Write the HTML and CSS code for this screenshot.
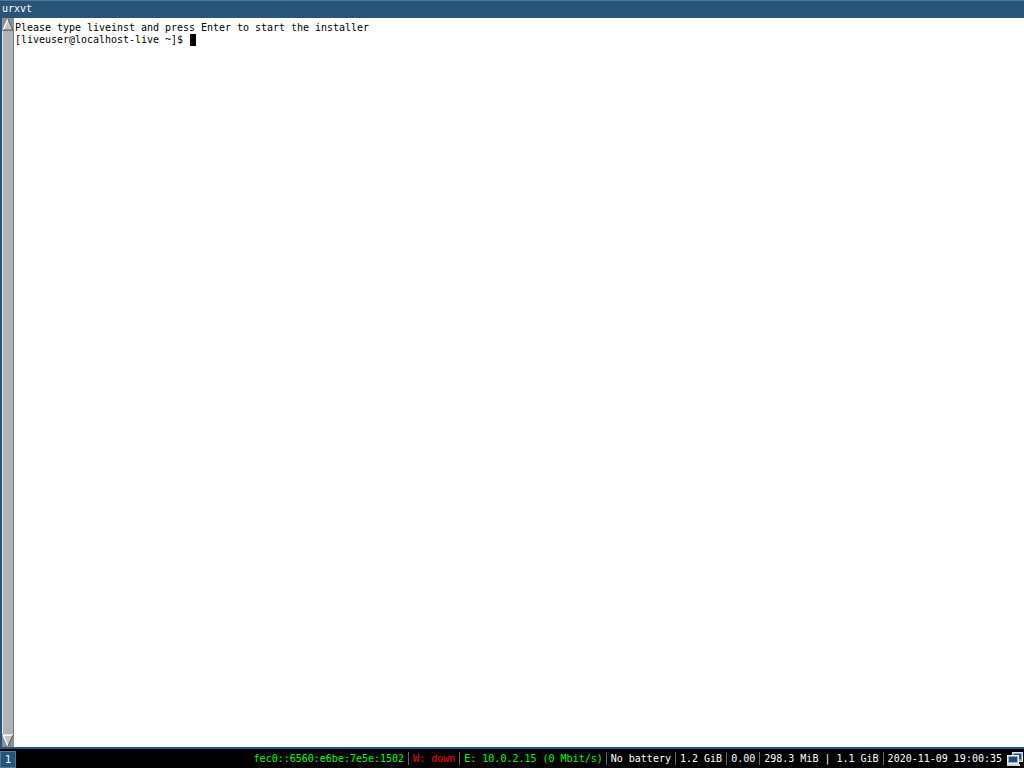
FILE: index.html
```
<!DOCTYPE html>
<html lang="en">
<head>
<meta charset="utf-8">
<title>urxvt</title>
<link rel="stylesheet" href="styles.css">
</head>
<body>
<div class="desktop">
  <div class="window">
    <div class="titlebar">urxvt</div>
    <div class="client">
      <div class="scrollbar">
        <svg class="arrow" width="12" height="13" viewBox="0 0 12 13"><rect width="12" height="13" fill="#8f8f8f"/><path d="M1 12 6 1 11 12Z" fill="#c4c4c4"/><path d="M1 12 6 1" stroke="#fff" stroke-width="1.4" fill="none"/><path d="M6 1 11 12H1" stroke="#555" fill="none"/></svg>
        <div class="thumb"></div>
        <svg class="arrow" width="12" height="13" viewBox="0 0 12 13"><rect width="12" height="13" fill="#8f8f8f"/><path d="M1 1 6 12 11 1Z" fill="#c4c4c4"/><path d="M1 1H11M1 1 6 12" stroke="#fff" stroke-width="1.4" fill="none"/><path d="M11 1 6 12" stroke="#555" fill="none"/></svg>
      </div>
      <div class="terminal">
        <div class="line">Please type liveinst and press Enter to start the installer</div>
        <div class="line">[liveuser@localhost-live ~]$ <span class="cursor"></span></div>
      </div>
    </div>
  </div>
  <div class="panel">
    <div class="workspace">1</div>
    <div class="status">
      <span class="seg good">fec0::6560:e6be:7e5e:1502</span>
      <span class="seg bad">W: down</span>
      <span class="seg good seg-tight">E: 10.0.2.15 (0 Mbit/s)</span>
      <span class="seg">No battery</span>
      <span class="seg">1.2 GiB</span>
      <span class="seg">0.00</span>
      <span class="seg">298.3 MiB | 1.1 GiB</span>
      <span class="seg">2020-11-09 19:00:35</span>
    </div>
    <svg class="tray" width="16" height="15" viewBox="0 0 16 15">
      <rect x="5.5" y="0.5" width="10" height="9" fill="#8aa0b8" stroke="#e0e2e4"/>
      <rect x="7" y="2" width="7" height="5" fill="#24517f"/>
      <rect x="0.5" y="3.5" width="11" height="8" fill="#9db0c4" stroke="#f0f0f0"/>
      <rect x="2" y="5" width="8" height="5" fill="#1d4a7a"/>
      <rect x="0" y="12" width="13" height="2" fill="#d0d2d4"/>
    </svg>
  </div>
</div>
</body>
</html>
```
FILE: styles.css
```
html, body {
  margin: 0;
  padding: 0;
  height: 100%;
  overflow: hidden;
}
.desktop {
  display: flex;
  flex-direction: column;
  width: 1024px;
  height: 768px;
  font-family: "DejaVu Sans Mono", monospace;
  font-size: 10px;
}
.window {
  flex: 1;
  display: flex;
  flex-direction: column;
  min-height: 0;
  border-bottom: 2px solid #285577;
}
.titlebar {
  height: 17px;
  line-height: 16px;
  padding-left: 2px;
  background: #285577;
  border-top: 1px solid #4c7899;
  color: #fff;
  flex: none;
}
.client {
  flex: 1;
  display: flex;
  min-height: 0;
  background: #fff;
}
.scrollbar {
  width: 14px;
  flex: none;
  display: flex;
  flex-direction: column;
  background: #b3b3b3;
  border-left: 2px solid #285577;
  box-sizing: border-box;
}
.arrow {
  flex: none;
  display: block;
}
.thumb {
  flex: 1;
  background: #b3b3b3;
  border-left: 1px solid #e8e8e8;
  border-right: 1px solid #777;
}
.terminal {
  flex: 1;
  padding: 4px 0 0 1px;
  color: #000;
  letter-spacing: -0.02px;
}
.line {
  height: 12px;
  line-height: 12px;
  white-space: pre;
}
.cursor {
  display: inline-block;
  width: 6px;
  height: 12px;
  margin-left: 1px;
  background: #000;
  vertical-align: top;
}
.panel {
  height: 19px;
  flex: none;
  display: flex;
  align-items: center;
  background: #000;
  color: #fff;
}
.workspace {
  box-sizing: border-box;
  width: 16px;
  height: 17px;
  margin-top: 2px;
  line-height: 15px;
  text-align: center;
  background: #285577;
  border: 1px solid #4c7899;
  flex: none;
}
.status {
  margin-left: auto;
  display: flex;
}
.seg {
  padding: 0 4px;
  border-left: 1px solid #666;
  line-height: 13px;
  white-space: pre;
}
.seg:first-child {
  border-left: 0;
}
.seg-tight {
  padding-right: 3px;
}
.good { color: #00ff00; }
.bad { color: #ff0000; }
.tray {
  flex: none;
  margin: 2px 1px 0 1px;
}
```
